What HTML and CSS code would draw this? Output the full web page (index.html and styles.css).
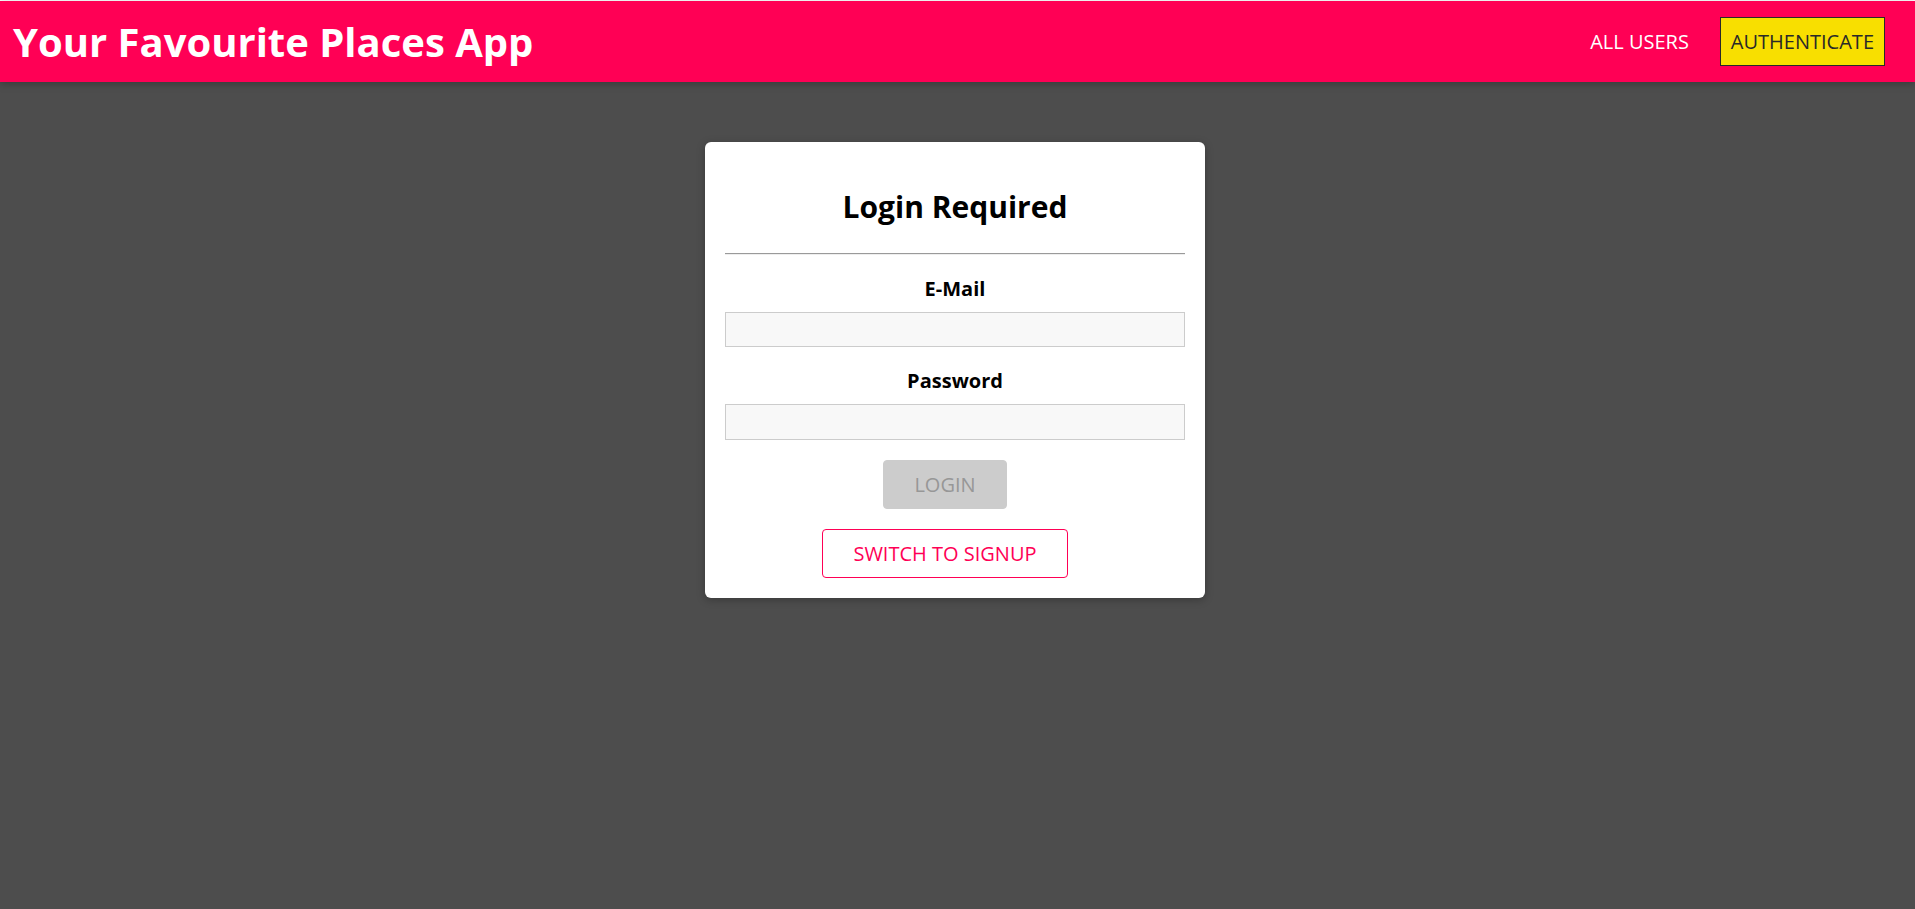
FILE: index.html
```html
<!DOCTYPE html>
<html lang="en">
<head>
<meta charset="utf-8">
<title>Your Favourite Places App</title>
<link rel="stylesheet" href="styles.css">
</head>
<body>
<div class="top-strip"></div>
<header class="main-header">
  <h1 class="main-title">Your Favourite Places App</h1>
  <nav>
    <ul class="nav-links">
      <li><a href="#" class="nav-link">ALL USERS</a></li>
      <li><a href="#" class="nav-link active">AUTHENTICATE</a></li>
    </ul>
  </nav>
</header>
<main class="main">
  <div class="card authentication">
    <h2 class="auth-title">Login Required</h2>
    <hr class="auth-rule">
    <form class="auth-form">
      <div class="form-control">
        <label class="form-label" for="email">E-Mail</label>
        <input class="form-input" id="email" type="email">
      </div>
      <div class="form-control">
        <label class="form-label" for="password">Password</label>
        <input class="form-input" id="password" type="password">
      </div>
      <button type="submit" class="button button-disabled" disabled>LOGIN</button>
    </form>
    <button type="button" class="button button-inverse">SWITCH TO SIGNUP</button>
  </div>
</main>
</body>
</html>
```

FILE: styles.css
```css
html {
  font-size: 20px;
}

body {
  margin: 0;
  font-family: "Open Sans", "Noto Sans", sans-serif;
  font-size: 20px;
  background: #4d4d4d;
  color: #000;
  min-height: 909px;
}

.top-strip {
  height: 1px;
  background: #ffffff;
}

.main-header {
  height: 81px;
  display: flex;
  align-items: center;
  justify-content: space-between;
  background: #ff0055;
  box-shadow: 0 2px 8px rgba(0, 0, 0, 0.26);
  padding: 0 20px 0 13px;
  position: relative;
  z-index: 5;
}

.main-title {
  margin: 2px 0 0;
  color: #ffffff;
  font-size: 40px;
  font-weight: 700;
  line-height: 1.362;
}

.nav-links {
  list-style: none;
  margin: 0;
  padding: 0;
  display: flex;
  align-items: center;
}

.nav-links li {
  margin: 0 10px;
}

.nav-link {
  display: block;
  border: 1px solid transparent;
  color: #ffffff;
  text-decoration: none;
  padding: 10px;
  line-height: 1.362;
}

.nav-link.active {
  background: #f8df00;
  border-color: #292929;
  color: #292929;
}

.main {
  padding: 0 5px 0 0;
}

.card {
  position: relative;
  margin: 0;
  box-shadow: 0 2px 8px rgba(0, 0, 0, 0.26);
  border-radius: 6px;
  padding: 20px;
  overflow: hidden;
  background: #ffffff;
}

.authentication {
  width: 90%;
  max-width: 460px;
  margin: 60px auto 0;
  text-align: center;
}

.auth-title {
  font-size: 30px;
  font-weight: 700;
  margin: 24.9px 0;
  line-height: 1.362;
}

.auth-rule {
  margin: 0 0 20px;
  border: 0;
  border-top: 1px solid #9a9a9a;
  border-bottom: 1px solid #eeeeee;
  height: 0;
}

.auth-form {
  margin: 0;
}

.form-control {
  margin: 0 0 20px;
}

.form-label {
  display: block;
  font-weight: 700;
  margin-bottom: 10px;
  line-height: 1.362;
}

.form-input {
  display: block;
  width: 100%;
  box-sizing: border-box;
  font: inherit;
  line-height: 1.362;
  border: 1px solid #cccccc;
  background: #f8f8f8;
  padding: 3px 5px;
  margin: 0;
}

.button {
  font: inherit;
  line-height: 1.362;
  padding: 10px 30px;
  border: 1px solid #ff0055;
  border-radius: 4px;
  background: #ff0055;
  color: #ffffff;
  margin: 0 20px 0 0;
  display: inline-block;
  cursor: pointer;
}

.button-disabled {
  background: #cccccc;
  color: #979797;
  border-color: #cccccc;
  cursor: not-allowed;
}

.button-inverse {
  background: transparent;
  color: #ff0055;
  margin-top: 20px;
  padding: 10px 30px;
}
```
